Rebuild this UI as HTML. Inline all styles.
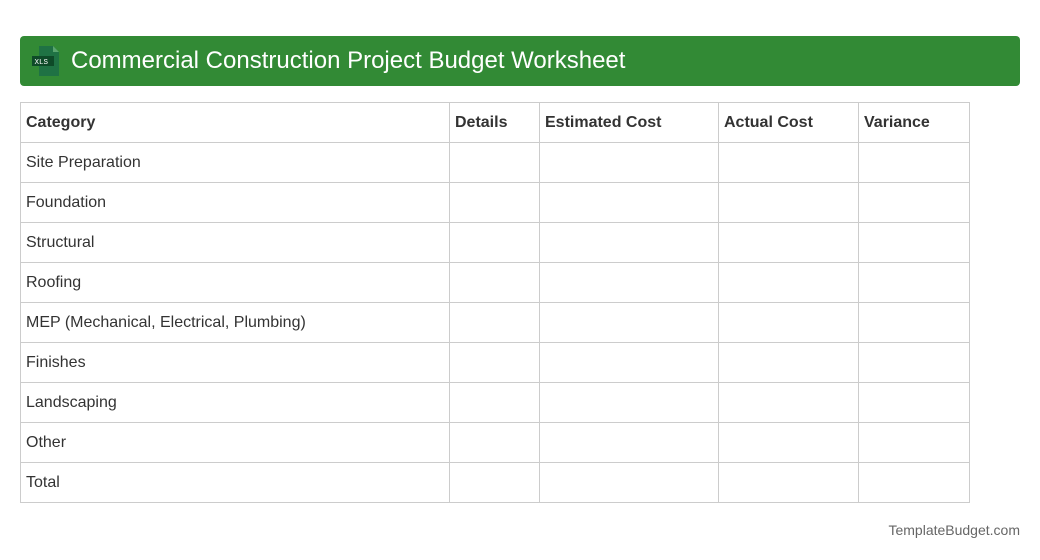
<!DOCTYPE html>
<html><head><style>
body{margin:0;background:#fff;font-family:"Liberation Sans",sans-serif;width:1040px;height:560px;position:relative;overflow:hidden}
.hdr{position:absolute;left:20px;top:36px;width:1000px;height:50px;background:#328a35;border-radius:4px}
.hdr .t{position:absolute;left:51px;top:11px;color:#fff;font-size:24px}
table{position:absolute;left:20px;top:102px;border-collapse:collapse;font-size:16px;color:#333}
td{border:1px solid #ccc;height:40px;padding:0 5px;box-sizing:border-box}
tr:first-child td{font-weight:bold}
.f{position:absolute;right:20px;top:522px;color:#666;font-size:14px}
</style></head><body>
<div class="hdr">
<svg style="position:absolute;left:10px;top:9px" width="32" height="32" viewBox="0 0 32 32">
<path d="M9 1h14l6 6v24H9z" fill="#1f7244"/><path d="M23 1v6h6z" fill="#5aa56f"/>
<rect x="2" y="11" width="22" height="10" fill="#0e4a28"/>
<text x="4.5" y="19" font-size="7.5" fill="#fff" font-family="Liberation Mono">XLS</text></svg>
<div class="t">Commercial Construction Project Budget Worksheet</div></div>
<table>
<tr><td style="width:429px">Category</td><td style="width:90px">Details</td><td style="width:179px">Estimated Cost</td><td style="width:140px">Actual Cost</td><td style="width:111px">Variance</td></tr>
<tr><td>Site Preparation</td><td></td><td></td><td></td><td></td></tr>
<tr><td>Foundation</td><td></td><td></td><td></td><td></td></tr>
<tr><td>Structural</td><td></td><td></td><td></td><td></td></tr>
<tr><td>Roofing</td><td></td><td></td><td></td><td></td></tr>
<tr><td>MEP (Mechanical, Electrical, Plumbing)</td><td></td><td></td><td></td><td></td></tr>
<tr><td>Finishes</td><td></td><td></td><td></td><td></td></tr>
<tr><td>Landscaping</td><td></td><td></td><td></td><td></td></tr>
<tr><td>Other</td><td></td><td></td><td></td><td></td></tr>
<tr><td>Total</td><td></td><td></td><td></td><td></td></tr>
</table>
<div class="f">TemplateBudget.com</div>
</body></html>
